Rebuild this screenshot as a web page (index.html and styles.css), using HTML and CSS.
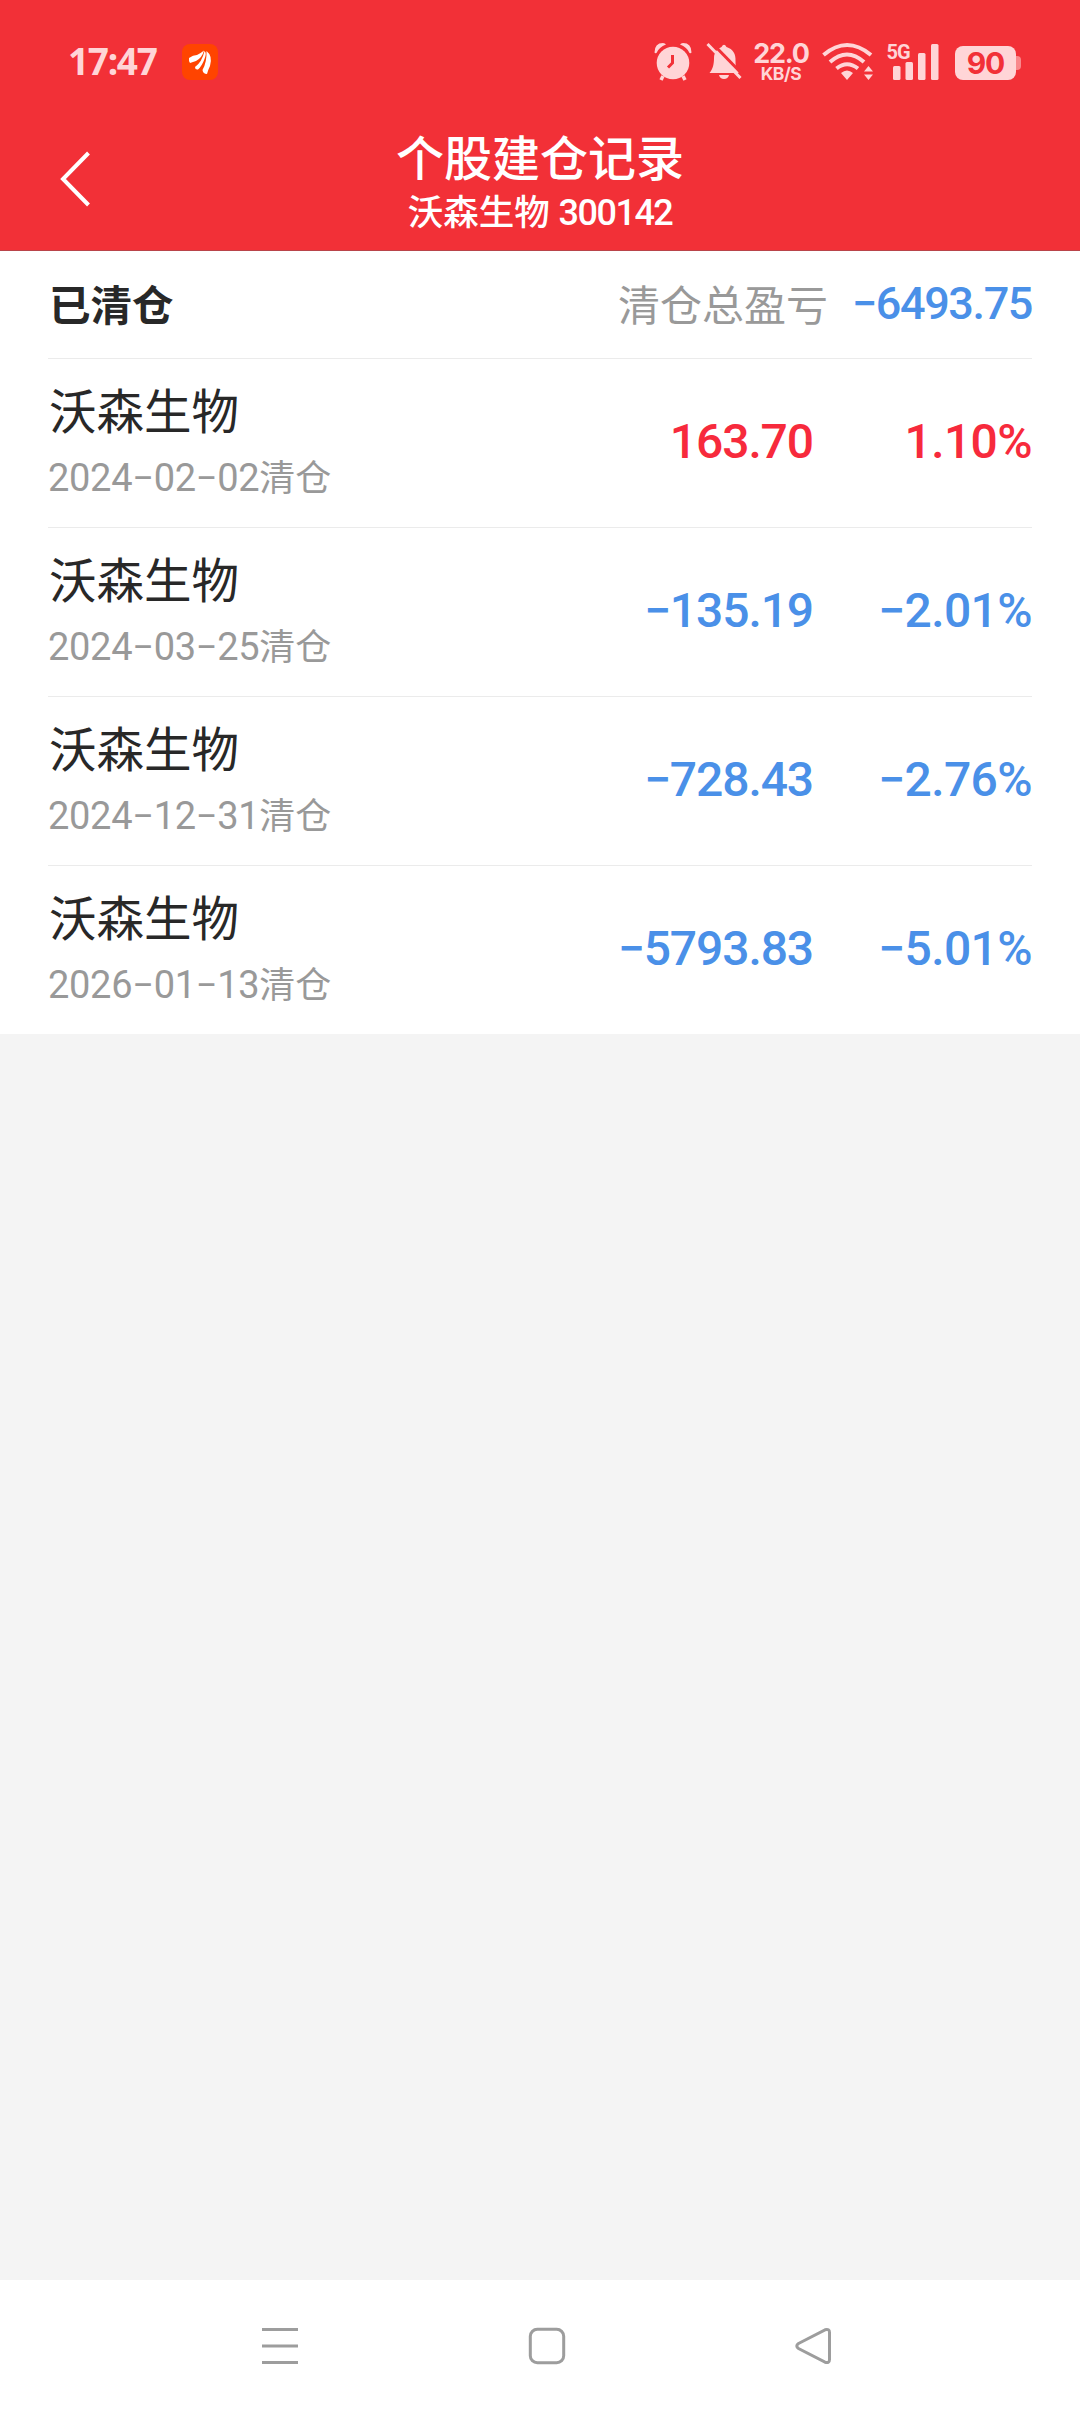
FILE: index.html
```
<!DOCTYPE html>
<html lang="zh-CN">
  <head>
    <meta charset="UTF-8" />
    <title>个股建仓记录</title>
    <link rel="stylesheet" href="styles.css">
  </head>

  <body>

    <div class="statusBar">
      <span class="time">17:47</span>
      <svg class="appIcon" width="36" height="36" viewBox="0 0 36 36">
        <rect width="36" height="36" rx="8" fill="#ff4400"/>
        <path d="M7 14 Q11 11 15 11 Q19 9 22 6.500 Q20 14 14 17 L8 19 Q6.500 17 7 14 Z M13 23 Q20 18 22.500 7 Q25 9 22.500 15 Q20 22 16 25.500 Q13 26 13 23 Z M20.500 26 Q25 18 24.500 7 Q31 12 28 22 Q26 26 25 30 Q21 30 20.500 26 Z" fill="#fff"/>
      </svg>

      <div class="statusRight">
        <svg class="alarm" width="38" height="40" viewBox="0 0 38 40">
          <circle cx="19" cy="21" r="16.3"/>
          <path d="M0.500 10.500 Q0.500 1 9 1 Q11 1 12 2.500 Q5 5 2.500 11 Q1 11.500 0.500 10.500 Z M37.500 10.500 Q37.500 1 29 1 Q27 1 26 2.500 Q33 5 35.500 11 Q37 11.500 37.500 10.500 Z"/>
          <path class="line" d="M9 34 L7 38 M29 34 L31 38" stroke-width="3.500"/>
          <path class="hand" d="M18.500 13 V21 L14 25.500"/>
        </svg>
        <svg class="bell" width="38" height="40" viewBox="0 0 38 40">
          <path d="M3.500 31 C7 27 8 22 8 16 C8 10 12 6.500 15.500 5 Q18 0.500 20.500 5 C27 7 30 12 29.500 19 C29.500 26 31 28 33 31 Z"/>
          <path d="M13 33 H23 Q22 37 18 37 Q14 37 13 33 Z"/>
          <path class="cut" d="M4 -1 L40 36"/>
          <path class="line" d="M1.500 2 L34.500 36" stroke-width="3"/>
        </svg>
        <div class="speed">
          <span class="speedNum">22.0</span>
          <span class="speedUnit">KB/S</span>
        </div>
        <svg class="wifi" width="52" height="40" viewBox="0 0 52 40">
          <path class="line" d="M1.500 13 Q25 -7 49 13 M8 20 Q25 5 42 20 M14.500 26.500 Q25 18 36 26.500" stroke-width="4"/>
          <path d="M19 31 Q25 26 31 31 L25 38 Z M42 29.500 L46.500 24 L51 29.500 Z M42 32.500 L46.500 38 L51 32.500 Z"/>
        </svg>
        <svg class="signal" width="52" height="40" viewBox="0 0 52 40">
          <text x="-0.500" y="16.500">5G</text>
          <rect x="6" y="24" width="7.500" height="14" rx="1.500"/>
          <rect x="18.500" y="20" width="7.500" height="18" rx="1.500"/>
          <rect x="31" y="11" width="7.500" height="27" rx="1.500"/>
          <rect x="44" y="2" width="7.500" height="36" rx="1.500"/>
        </svg>
        <div class="battery">90</div>
        <div class="batteryTip"></div>
      </div>
    </div>

    <div class="header">
      <svg class="back" width="36" height="60" viewBox="0 0 36 60">
        <path d="M31.500 4 L6 30 L31.500 56" fill="none" stroke="#fff" stroke-width="4"/>
      </svg>
      <div class="headerTitle">
        <h1>个股建仓记录</h1>
        <div class="stock">沃森生物 <span class="code">300142</span></div>
      </div>
    </div>

    <div class="list">
      <div class="summary">
        <h2>已清仓</h2>
        <span class="totalLabel">清仓总盈亏</span>
        <span class="total down">−6493.75</span>
      </div>

      <div class="row">
        <div class="info">
          <div class="name">沃森生物</div>
          <div class="date"><span>2024−02−02</span>清仓</div>
        </div>
        <div class="amount up">163.70</div>
        <div class="rate up">1.10%</div>
      </div>

      <div class="row">
        <div class="info">
          <div class="name">沃森生物</div>
          <div class="date"><span>2024−03−25</span>清仓</div>
        </div>
        <div class="amount down">−135.19</div>
        <div class="rate down">−2.01%</div>
      </div>

      <div class="row">
        <div class="info">
          <div class="name">沃森生物</div>
          <div class="date"><span>2024−12−31</span>清仓</div>
        </div>
        <div class="amount down">−728.43</div>
        <div class="rate down">−2.76%</div>
      </div>

      <div class="row">
        <div class="info">
          <div class="name">沃森生物</div>
          <div class="date"><span>2026−01−13</span>清仓</div>
        </div>
        <div class="amount down">−5793.83</div>
        <div class="rate down">−5.01%</div>
      </div>
    </div>

    <div class="navBar">
      <svg width="40" height="40" viewBox="0 0 40 40">
        <path d="M2 3.500 H38 M2 20 H38 M2 36.500 H38"/>
      </svg>
      <svg width="40" height="40" viewBox="0 0 40 40">
        <rect x="3.300" y="3.300" width="33.400" height="33.400" rx="7"/>
      </svg>
      <svg width="40" height="40" viewBox="0 0 40 40">
        <path d="M4.500 17.500 L31 3.800 Q35.500 2.500 35.500 6.500 V33.500 Q35.500 37.500 31 36.200 L4.500 22.500 Q1 20 4.500 17.500 Z"/>
      </svg>
    </div>

  </body>
</html>
```
FILE: styles.css
```
* {
  box-sizing: border-box;
}

body {
  margin: 0;
  width: 1080px;
  height: 2412px;
  display: flex;
  flex-direction: column;
  background-color: #f4f4f4;
  color: #282828;
  font-family: Roboto, "Noto Sans CJK SC", sans-serif;
}

h1, h2 {
  margin: 0;
}

svg {
  display: block;
  flex-shrink: 0;
}

/* status bar */
.statusBar {
  height: 120px;
  padding: 42px 59px 0 68px;
  display: flex;
  align-items: flex-start;
  background-color: #f23037;
  color: #ffd5d7;
}

.time {
  width: 114px;
  font-family: "Noto Sans", sans-serif;
  font-size: 37px;
  font-weight: 700;
  line-height: 38px;
  letter-spacing: -1.3px;
}

.appIcon {
  margin-top: 2px;
}

.statusRight {
  margin-left: auto;
  display: flex;
  height: 40px;
  font-family: Inter, sans-serif;
}

.statusRight svg {
  fill: #ffd5d7;
}

.statusRight .line {
  fill: none;
  stroke: #ffd5d7;
}

.alarm .hand {
  fill: none;
  stroke: #f23037;
  stroke-width: 3px;
}

.bell .cut {
  fill: none;
  stroke: #f23037;
  stroke-width: 3px;
}

.bell {
  margin-left: 14px;
}

.speed {
  width: 60px;
  margin-left: 7px;
  margin-right: 2px;
  display: flex;
  flex-direction: column;
  align-items: center;
  font-weight: 700;
}

.speedNum {
  font-size: 27px;
  line-height: 23px;
  letter-spacing: -1.2px;
}

.speedUnit {
  font-size: 17.500px;
  font-weight: 700;
  line-height: 17px;
  letter-spacing: -0.5px;
}

.wifi {
  margin-left: 9px;
}

.signal {
  margin-left: 13px;
  overflow: visible;
}

.signal text {
  font-family: Roboto, sans-serif;
  font-size: 20px;
  font-weight: 700;
  letter-spacing: -1px;
}

.battery {
  width: 61px;
  height: 34px;
  margin: 4px 0 0 16px;
  border-radius: 8px;
  background-color: #ffd5d7;
  color: #f23037;
  font-size: 30px;
  font-weight: 700;
  line-height: 34px;
  letter-spacing: -1px;
  text-align: center;
}

.batteryTip {
  width: 5px;
  height: 14px;
  margin-top: 14px;
  border-radius: 0 4px 4px 0;
  background-color: #f9888c;
}

/* title bar */
.header {
  height: 131px;
  display: flex;
  background-color: #f23037;
  border-bottom: 1px solid #b9444a;
  color: #fff;
}

.back {
  margin: 29px 0 0 57px;
}

.headerTitle {
  flex: 1;
  margin-right: 93px;
  text-align: center;
}

.headerTitle h1 {
  margin-top: 6px;
  font-size: 48px;
  font-weight: 500;
  line-height: 68px;
}

.stock {
  font-size: 35.500px;
  font-weight: 500;
  line-height: 39px;
}

.code {
  font-size: 36px;
  letter-spacing: -1.5px;
}

/* records */
.list {
  background-color: #fff;
  padding: 0 48px;
}

.summary {
  height: 108px;
  display: flex;
  align-items: center;
  border-bottom: 1px solid #ebebeb;
}

.summary h2 {
  flex: 1;
  padding: 5px 0 0 1px;
  font-size: 41.500px;
  line-height: 60px;
}

.totalLabel {
  padding-top: 5px;
  margin-right: 24px;
  color: #999;
  font-size: 42px;
  line-height: 60px;
}

.total {
  font-size: 45px;
  font-weight: 500;
  letter-spacing: -1.4px;
  line-height: 60px;
  margin-bottom: 2px;
}

.row {
  height: 169px;
  display: flex;
  border-bottom: 1px solid #ebebeb;
}

.row:last-child {
  height: 168px;
  border-bottom: none;
}

.info {
  flex: 1;
  padding-top: 20px;
}

.name {
  padding-left: 1px;
  font-size: 47.500px;
  line-height: 69px;
}

.date {
  color: #999;
  font-size: 36px;
  line-height: 60px;
}

.date span {
  font-size: 38px;
  letter-spacing: -0.3px;
}

.amount, .rate {
  font-size: 48px;
  font-weight: 500;
  letter-spacing: -1.1px;
  line-height: 166px;
  text-align: right;
}

.rate {
  width: 219px;
  letter-spacing: -0.6px;
}

.up {
  color: #f72a3c;
}

.down {
  color: #4a90e8;
}

/* system navigation */
.navBar {
  height: 132px;
  margin-top: auto;
  padding: 46px 246px 0 260px;
  display: flex;
  justify-content: space-between;
  background-color: #fff;
}

.navBar svg {
  fill: none;
  stroke: #9d9d9d;
  stroke-width: 3px;
}
```
